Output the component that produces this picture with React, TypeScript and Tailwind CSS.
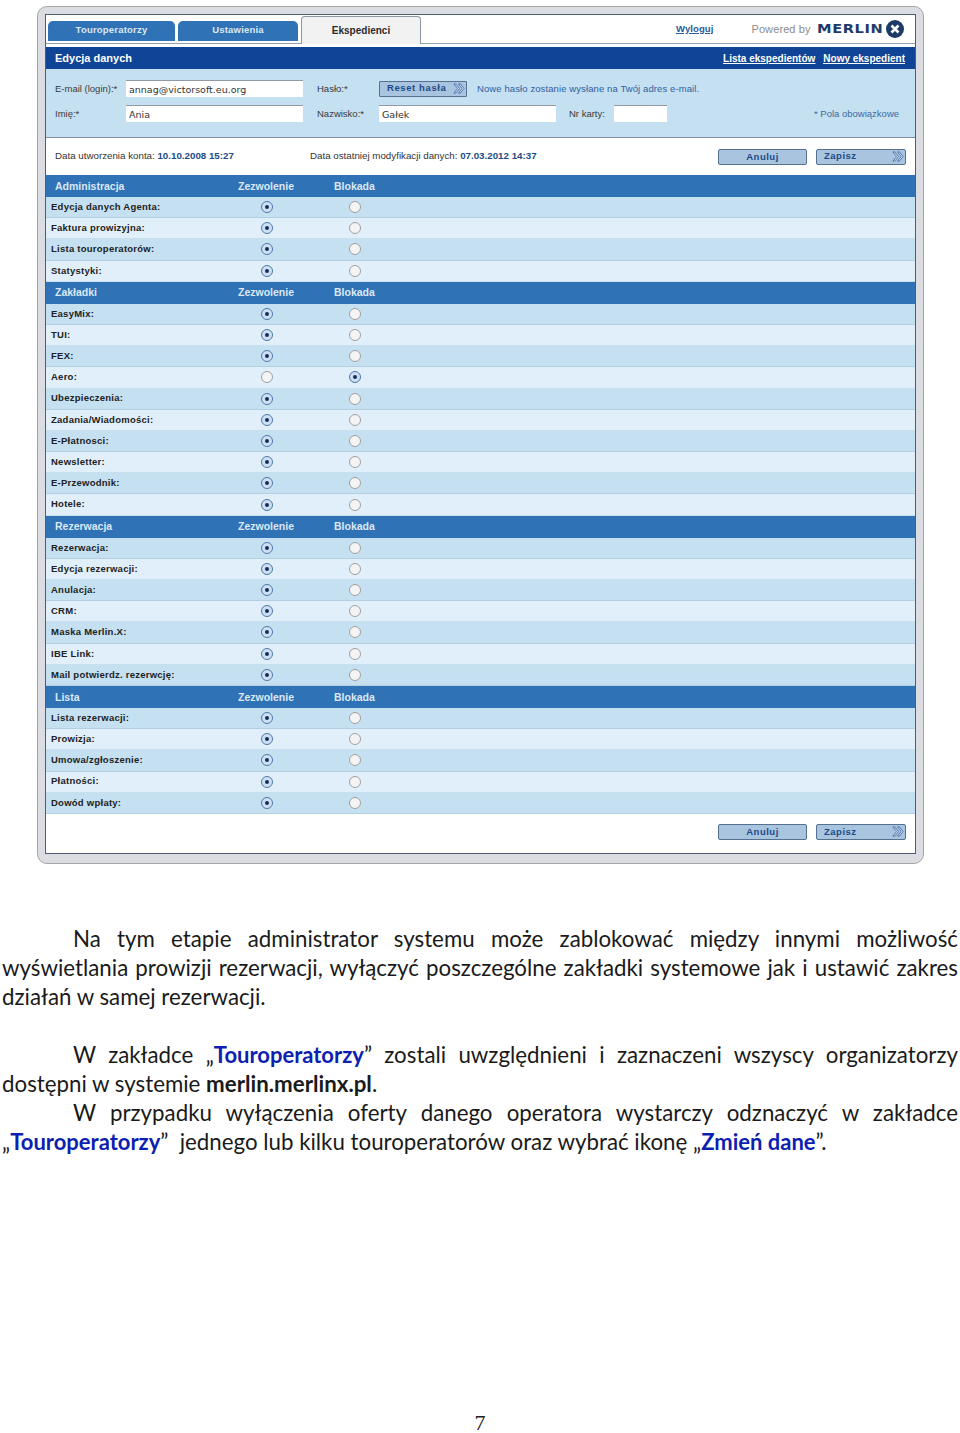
const sections = [
  {
    title: "Administracja",
    rows: ["Edycja danych Agenta:", "Faktura prowizyjna:", "Lista touroperatorów:", "Statystyki:"],
  },
  {
    title: "Zakładki",
    rows: ["EasyMix:", "TUI:", "FEX:", "Aero:", "Ubezpieczenia:", "Zadania/Wiadomości:", "E-Płatnosci:", "Newsletter:", "E-Przewodnik:", "Hotele:"],
  },
  {
    title: "Rezerwacja",
    rows: ["Rezerwacja:", "Edycja rezerwacji:", "Anulacja:", "CRM:", "Maska Merlin.X:", "IBE Link:", "Mail potwierdz. rezerwcję:"],
  },
  {
    title: "Lista",
    rows: ["Lista rezerwacji:", "Prowizja:", "Umowa/zgłoszenie:", "Płatności:", "Dowód wpłaty:"],
  },
];

const Chevrons = () => (
  <svg width="12" height="11" viewBox="0 0 13 12" fill="#eef4fb" stroke="#2f5f9f" strokeWidth="0.9">
    <path d="M1 1h2l4 5-4 5H1l4-5z" />
    <path d="M6 1h2l4 5-4 5H6l4-5z" />
  </svg>
);

const Radio = ({ on }: { on: boolean }) => (
  <span
    className={
      on
        ? "flex h-3 w-3 items-center justify-center rounded-full border border-[#4f78a8] bg-[#cfe0f3]"
        : "flex h-3 w-3 items-center justify-center rounded-full border border-[#a0a0a0] bg-[#f4f4f4]"
    }
  >
    {on && <span className="h-1 w-1 rounded-full bg-[#12305f]" />}
  </span>
);

const Field = ({ value, width }: { value?: string; width: string }) => (
  <input
    readOnly
    defaultValue={value}
    className={`${width} mb-[2px] h-[17px] border-t border-[#8f9aa5] bg-white pl-[3px] font-['DejaVu_Sans',sans-serif] text-[9.5px] text-[#333] outline-none`}
  />
);

const ActionBar = ({ className }: { className: string }) => (
  <div className={`flex justify-end gap-[9px] pr-[9px] ${className}`}>
    <button className="h-[16px] w-[89px] rounded-[2px] border border-[#56708f] bg-[#a9c4df] text-center text-[9.5px] font-bold tracking-[0.5px] text-[#1d4a86]">
      Anuluj
    </button>
    <button className="flex h-[16px] w-[90px] items-center justify-between rounded-[2px] border border-[#56708f] bg-[#a9c4df] pl-[7px] pr-[1px] text-[9.5px] font-bold tracking-[0.5px] text-[#1d4a86]">
      Zapisz
      <Chevrons />
    </button>
  </div>
);

const Line = ({ children, last }: { children: React.ReactNode; last?: boolean }) => (
  <div className={last ? "text-left" : "text-justify [text-align-last:justify]"}>{children}</div>
);

const Blue = ({ children }: { children: React.ReactNode }) => (
  <b className="text-[22px] font-bold text-[#0d1fb0]">{children}</b>
);

export default function App() {
  return (
    <div className="h-[1433px] w-[960px] bg-white font-['Liberation_Sans',Arial,sans-serif]">
      <div className="ml-[37px] mt-[6px] h-[858px] w-[887px] rounded-[10px] border border-[#a5a5a5] bg-[#dcdde2] pl-[7px] pr-[7px] pt-[7px]">
        <div className="flex h-[840px] w-[871px] flex-col border border-[#4f5c74] bg-white">
          {/* tabs */}
          <div className="flex h-[29px] items-end border-b border-[#8fa0b0] pl-[2px]">
            <div className="mb-[2px] flex h-[20px] w-[127px] items-center justify-center rounded-t-[5px] bg-[#2f72b5] pb-[2px] text-[9.5px] font-bold tracking-[0.2px] text-[#dbe8f5]">
              Touroperatorzy
            </div>
            <div className="mb-[2px] ml-[3px] flex h-[20px] w-[120px] items-center justify-center rounded-t-[5px] bg-[#2f72b5] pb-[2px] text-[9.5px] font-bold tracking-[0.2px] text-[#dbe8f5]">
              Ustawienia
            </div>
            <div className="-mb-px ml-[3px] flex h-[28px] w-[120px] items-center justify-center rounded-t-[4px] border border-b-0 border-[#8a97a5] bg-[#f2f2f2] text-[10px] font-bold text-[#2a2a2a]">
              Ekspedienci
            </div>
            <div className="flex h-full flex-1 items-center">
              <a className="ml-[255px] text-[9.5px] font-bold tracking-[0.1px] text-[#2a5a9a] underline">Wyloguj</a>
              <span className="ml-[38px] text-[11px] tracking-[0.1px] text-[#8b8b8b]">Powered by</span>
              <span className="ml-[6px] inline-block w-[69px] origin-left scale-x-[1.17] font-['DejaVu_Sans',sans-serif] text-[12.5px] font-bold tracking-[0.5px] text-[#1f3a68]">
                MERLIN
              </span>
              <svg width="18" height="18" viewBox="0 0 18 18">
                <circle cx="9" cy="9" r="9" fill="#1f3a68" />
                <path d="M5.5 5.5l7 7M12.5 5.5l-7 7" stroke="#fff" strokeWidth="2.6" />
              </svg>
            </div>
          </div>

          {/* title band */}
          <div className="mt-[3px] flex h-[22px] items-center justify-between bg-[#0f4496] pl-[9px] pr-[10px] text-white">
            <span className="text-[11px] font-bold">Edycja danych</span>
            <span className="flex gap-[8px] text-[10px] font-bold underline">
              <a>Lista ekspedientów</a>
              <a>Nowy ekspedient</a>
            </span>
          </div>

          {/* form */}
          <div className="flex h-[69px] flex-col border-b border-[#7f8d9c] bg-[#c5e0f1] pl-[9px] pt-[12px] text-[9.5px] text-[#3a3a3a]">
            <div className="flex h-[17px] items-center">
              <span className="w-[71px]">E-mail (login):*</span>
              <Field value="annag@victorsoft.eu.org" width="w-[177px]" />
              <span className="ml-[14px] w-[62px]">Hasło:*</span>
              <button className="mb-[2px] flex h-[16px] w-[88px] items-center justify-between rounded-[1px] border border-[#56708f] bg-[#a9c4df] pl-[7px] pr-[1px] text-[9.5px] font-bold tracking-[0.6px] text-[#1d4a86]">
                Reset hasła
                <Chevrons />
              </button>
              <span className="ml-[10px] text-[9.5px] tracking-[0.1px] text-[#2f5f9f]">Nowe hasło zostanie wysłane na Twój adres e-mail.</span>
            </div>
            <div className="mt-[8px] flex h-[17px] items-center">
              <span className="w-[71px]">Imię:*</span>
              <Field value="Ania" width="w-[177px]" />
              <span className="ml-[14px] w-[62px]">Nazwisko:*</span>
              <Field value="Gałek" width="w-[177px]" />
              <span className="ml-[13px] w-[45px]">Nr karty:</span>
              <Field width="w-[53px]" />
              <span className="ml-[147px] text-[#3f6a9c]">* Pola obowiązkowe</span>
            </div>
          </div>

          {/* dates */}
          <div className="flex h-[37px] items-center text-[9.75px] text-[#333]">
            <span className="ml-[9px] w-[255px]">
              Data utworzenia konta: <b className="text-[#1d4a86]">10.10.2008 15:27</b>
            </span>
            <span>
              Data ostatniej modyfikacji danych: <b className="text-[#1d4a86]">07.03.2012 14:37</b>
            </span>
            <ActionBar className="flex-1" />
          </div>

          {/* permission table */}
          <div>
            {sections.map((section) => (
              <div key={section.title}>
                <div className="flex h-[22px] items-center bg-[#2f72b5] pl-[9px] pt-[1px] text-[10.5px] font-bold text-[#dbe8f5]">
                  <span className="w-[183px]">{section.title}</span>
                  <span className="w-[96px]">Zezwolenie</span>
                  <span>Blokada</span>
                </div>
                {section.rows.map((row, i) => (
                  <div
                    key={row}
                    className={
                      i % 2 === 0
                        ? "flex h-[21.2px] items-center border-b border-[#b3cfe2] bg-[#c5e0f1]"
                        : "flex h-[21.2px] items-center border-b border-[#c8dfee] bg-[#e0eff9]"
                    }
                  >
                    <span className="w-[215px] pl-[5px] text-[9.5px] font-bold tracking-[0.25px] text-[#222]">{row}</span>
                    <Radio on={row !== "Aero:"} />
                    <span className="ml-[76px]">
                      <Radio on={row === "Aero:"} />
                    </span>
                  </div>
                ))}
              </div>
            ))}
          </div>

          <ActionBar className="mt-[10px]" />
        </div>
      </div>

      {/* document text */}
      <div className="ml-[2px] mt-[60px] w-[956px] font-['Lato','Noto_Sans',sans-serif] text-[22.3px] leading-[29px] text-[#1a1a1a]">
        <Line>
          <span className="inline-block w-[71px]" />
          Na tym etapie administrator systemu może zablokować między innymi możliwość
        </Line>
        <Line>wyświetlania prowizji rezerwacji, wyłączyć poszczególne zakładki systemowe jak i ustawić zakres</Line>
        <Line last>działań w samej rezerwacji.</Line>
        <div className="h-[29px]" />
        <Line>
          <span className="inline-block w-[71px]" />W zakładce „<Blue>Touroperatorzy</Blue>” zostali uwzględnieni i zaznaczeni wszyscy organizatorzy
        </Line>
        <Line last>
          dostępni w systemie <b className="font-bold">merlin.merlinx.pl</b>.
        </Line>
        <Line>
          <span className="inline-block w-[71px]" />W przypadku wyłączenia oferty danego operatora wystarczy odznaczyć w zakładce
        </Line>
        <Line last>
          „<Blue>Touroperatorzy</Blue>” &nbsp;jednego lub kilku touroperatorów oraz wybrać ikonę „<Blue>Zmień dane</Blue>”.
        </Line>
      </div>

      <div className="mt-[257px] text-center font-['Liberation_Serif',serif] text-[22px] leading-[20px] text-[#222]">7</div>
    </div>
  );
}
